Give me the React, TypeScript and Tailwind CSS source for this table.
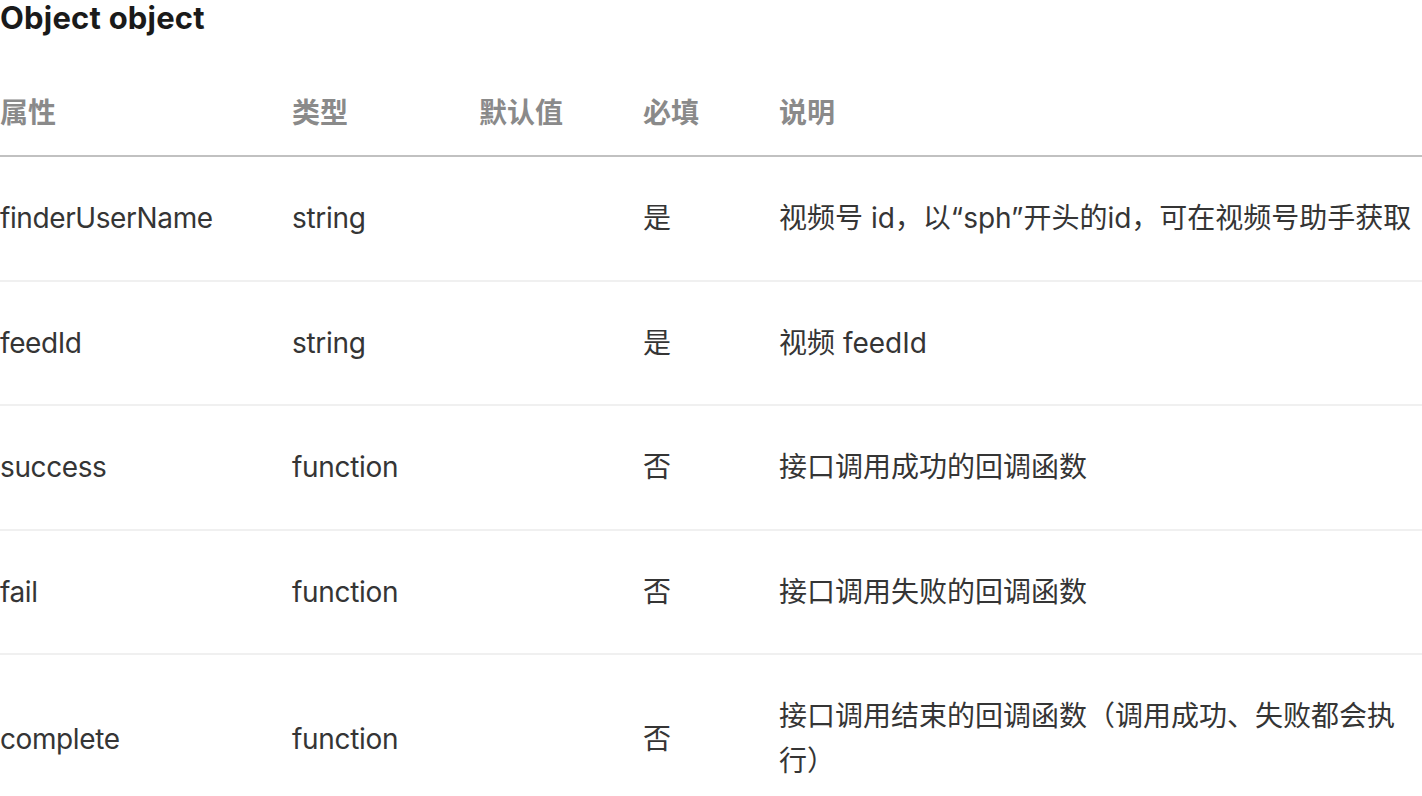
import React from "react";

type Row = {
  name: string,
  type: string,
  def: string,
  required: string,
  desc: string
}

const rows: Row[] = [
  { name: "finderUserName", type: "string", def: "", required: "是", desc: "视频号 id，以“sph”开头的id，可在视频号助手获取" },
  { name: "feedId", type: "string", def: "", required: "是", desc: "视频 feedId" },
  { name: "success", type: "function", def: "", required: "否", desc: "接口调用成功的回调函数" },
  { name: "fail", type: "function", def: "", required: "否", desc: "接口调用失败的回调函数" },
  { name: "complete", type: "function", def: "", required: "否", desc: "接口调用结束的回调函数（调用成功、失败都会执行）" },
];

const font = "font-['Inter','Noto_Sans_CJK_SC',sans-serif]";

const App: React.FC = () => {
  return (
    <div className={`w-[1422px] bg-white ${font}`}>
      <h3 className="h-[40px] text-[31px] leading-[36px] font-bold tracking-[0.2px] text-[#1a1a1a]">Object object</h3>
      <table className="w-full border-collapse table-fixed">
        <colgroup>
          <col className="w-[292px]" />
          <col className="w-[187px]" />
          <col className="w-[164px]" />
          <col className="w-[136px]" />
          <col />
        </colgroup>
        <thead>
          <tr className="border-b-2 border-[#c1c1c1] text-left text-[28px] leading-[45px] text-[#8a8a8a]">
            <th className="pt-[51px] pb-[19px] font-semibold">属性</th>
            <th className="pt-[51px] pb-[19px] font-semibold">类型</th>
            <th className="pt-[51px] pb-[19px] font-semibold">默认值</th>
            <th className="pt-[51px] pb-[19px] font-semibold">必填</th>
            <th className="pt-[51px] pb-[19px] font-semibold">说明</th>
          </tr>
        </thead>
        <tbody>
          {rows.map((r) => (
            <tr key={r.name} className="border-b-2 border-[#f0f0f0] text-[28px] leading-[44.6px] text-[#353535]">
              <td className="py-[39px] align-middle tracking-[-0.4px]">{r.name}</td>
              <td className="py-[39px] align-middle tracking-[-0.3px]">{r.type}</td>
              <td className="py-[39px] align-middle">{r.def}</td>
              <td className="py-[39px] align-middle">{r.required}</td>
              <td className="py-[39px] align-middle">{r.desc}</td>
            </tr>
          ))}
        </tbody>
      </table>
    </div>
  );
};

export default App;
